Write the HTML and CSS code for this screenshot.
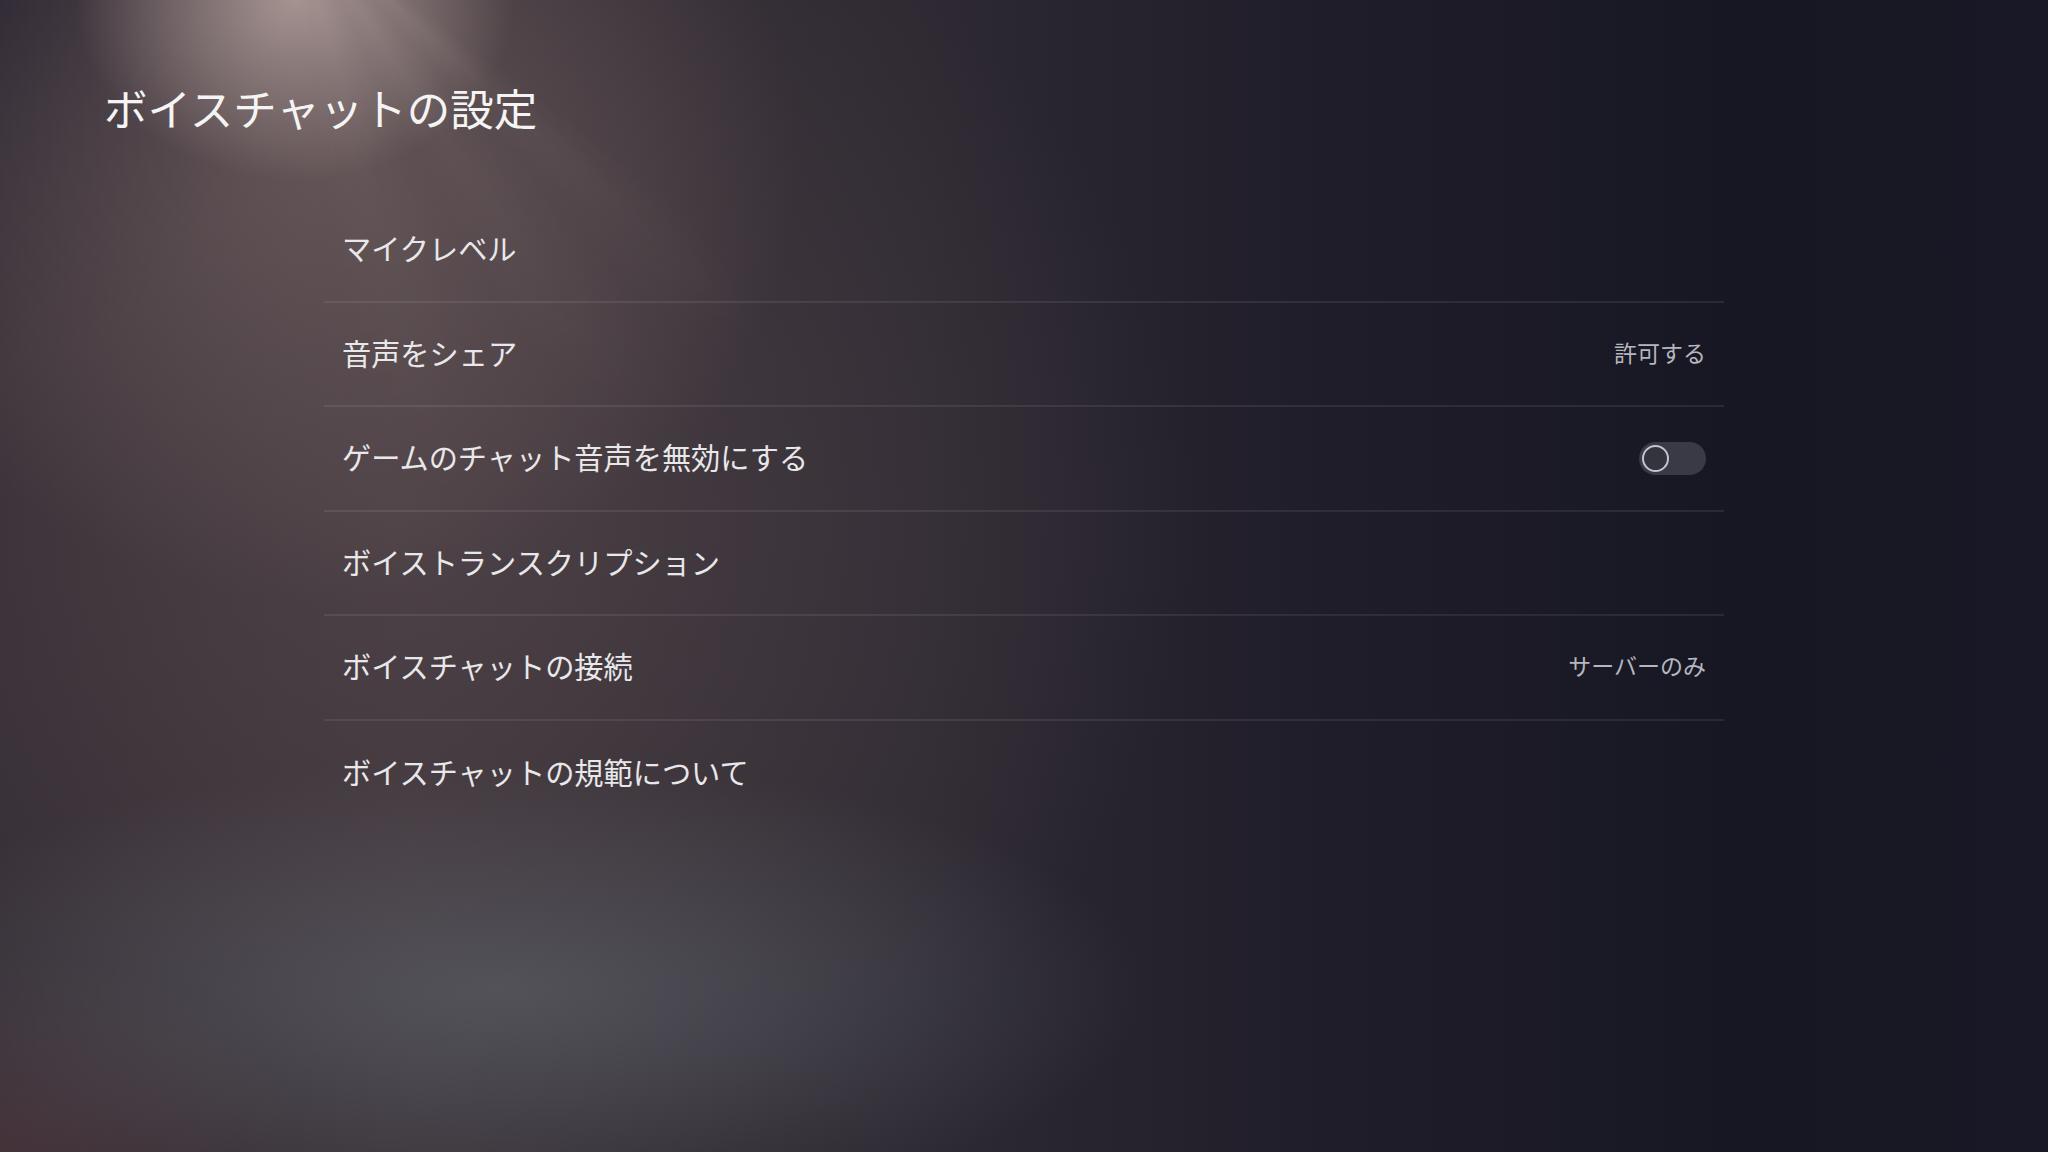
FILE: index.html
```html
<html>
<head>
	<meta charset="utf-8">
	<title>ボイスチャットの設定</title>
	<link rel="stylesheet" href="styles.css">
</head>
<body>
<div class="rays"></div>
<h1 class="title">ボイスチャットの設定</h1>

<div class="list">
	<div class="row"><span class="label">マイクレベル</span></div>
	<div class="row"><span class="label">音声をシェア</span><span class="value">許可する</span></div>
	<div class="row"><span class="label">ゲームのチャット音声を無効にする</span><span class="toggle"><span class="knob"></span></span></div>
	<div class="row"><span class="label">ボイストランスクリプション</span></div>
	<div class="row"><span class="label">ボイスチャットの接続</span><span class="value">サーバーのみ</span></div>
	<div class="row last"><span class="label">ボイスチャットの規範について</span></div>
</div>
</body>
</html>
```

FILE: styles.css
```css
html, body {
	margin: 0;
	height: 1152px;
	overflow: hidden;
}
body {
	position: relative;
	font-family: "Noto Sans CJK JP", "Noto Sans", sans-serif;
	color: #ececec;
	background:
		radial-gradient(ellipse 220px 180px at 295px 0px, rgba(200,180,175,0.7), rgba(200,180,175,0) 100%),
		radial-gradient(ellipse 480px 440px at 320px 160px, rgba(140,118,116,0.45), rgba(140,118,116,0) 100%),
		radial-gradient(ellipse 800px 700px at 400px 520px, rgba(95,80,84,0.5), rgba(95,80,84,0) 100%),
		radial-gradient(ellipse 650px 230px at 500px 990px, rgba(100,110,120,0.55), rgba(100,110,120,0) 100%),
		radial-gradient(ellipse 300px 200px at 0px 1152px, rgba(90,60,66,0.5), rgba(90,60,66,0) 100%),
		radial-gradient(ellipse 260px 360px at 0px 0px, rgba(30,28,42,0.7), rgba(30,28,42,0) 100%),
		linear-gradient(to right, #322b33 0%, #3a3238 20%, #2e2932 45%, #1f1d2a 65%, #171723 85%, #191826 100%);
}
.rays {
	position: absolute;
	left: 0;
	top: 0;
	width: 1100px;
	height: 700px;
	background: conic-gradient(from 0deg at 300px -80px,
		rgba(255,235,225,0) 0deg,
		rgba(255,235,225,0) 126deg,
		rgba(255,235,225,0.07) 132deg,
		rgba(255,235,225,0.02) 138deg,
		rgba(255,235,225,0.05) 146deg,
		rgba(255,235,225,0) 154deg,
		rgba(255,235,225,0.03) 166deg,
		rgba(255,235,225,0) 176deg,
		rgba(255,235,225,0) 360deg);
	-webkit-mask-image: radial-gradient(ellipse 620px 540px at 300px 0px, #000 0%, transparent 100%);
	mask-image: radial-gradient(ellipse 620px 540px at 300px 0px, #000 0%, transparent 100%);
}
.title {
	position: relative;
	margin: 0;
	padding: 79px 0 0 104px;
	font-size: 43.5px;
	font-weight: 400;
	line-height: 58px;
	color: #f4f4f4;
}
.list {
	position: relative;
	margin: 61px 0 0 324px;
	width: 1400px;
}
.row {
	box-sizing: border-box;
	height: 104.5px;
	padding: 0 18px 4px 18px;
	display: flex;
	align-items: center;
	justify-content: space-between;
	border-bottom: 2px solid rgba(255,255,255,0.08);
}
.row.last {
	border-bottom: none;
}
.label {
	font-size: 29.2px;
	color: #e8e8ea;
}
.value {
	font-size: 23px;
	color: #b6b6be;
}
.toggle {
	box-sizing: border-box;
	width: 67px;
	height: 33px;
	margin-top: 4px;
	border-radius: 17px;
	background: #3a3a46;
	padding: 3px;
	display: flex;
	align-items: center;
}
.knob {
	box-sizing: border-box;
	width: 27px;
	height: 27px;
	border-radius: 50%;
	border: 2.5px solid #c4c4cc;
	background: #34343f;
}
```
